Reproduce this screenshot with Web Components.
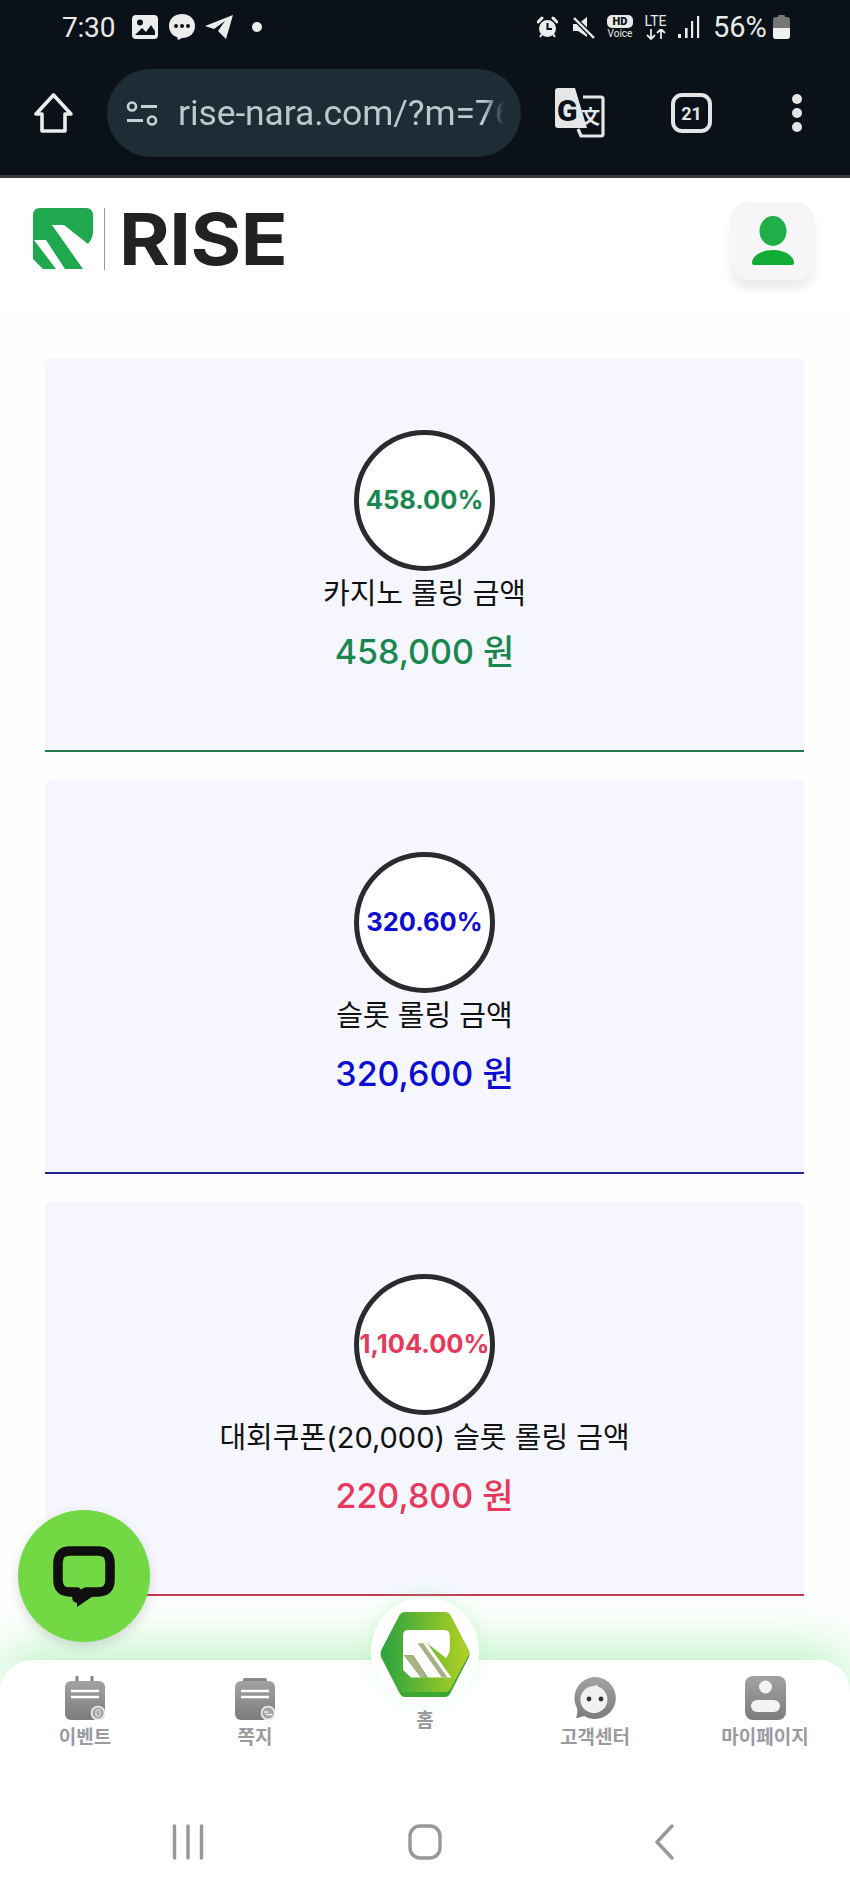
<!DOCTYPE html>
<html lang="ko">
<head>
<meta charset="utf-8">
<title>RISE</title>
<style>
  html, body { margin: 0; padding: 0; background: #fff; }
  body { font-family: Inter, "Noto Sans CJK KR", sans-serif; }
</style>
</head>
<body>
<app-shell>
  <phone-status-bar></phone-status-bar>
  <browser-toolbar url="rise-nara.com/?m=76" tabs="21"></browser-toolbar>
  <site-header></site-header>
  <rolling-list>
    <rolling-card percent="458.00%" amount="458,000 원" tone="#1a8750" line="#23774b">카지노 롤링 금액</rolling-card>
    <rolling-card percent="320.60%" amount="320,600 원" tone="#0c0cd2" line="#25258f">슬롯 롤링 금액</rolling-card>
    <rolling-card percent="1,104.00%" amount="220,800 원" tone="#e6395c" line="#c63a52">대회쿠폰(20,000) 슬롯 롤링 금액</rolling-card>
  </rolling-list>
  <bottom-nav>
    <nav-item label="이벤트">
      <svg slot="icon" width="40" height="44" viewBox="0 0 40 44">
        <defs><linearGradient id="g1" x1="0" y1="0" x2="0" y2="1"><stop offset="0" stop-color="#a2a2a4"/><stop offset="1" stop-color="#7c7c7e"/></linearGradient></defs>
        <path d="M12 0v9M27 0v9" stroke="#858587" stroke-width="3" stroke-linecap="round"/>
        <rect y="5" width="40" height="39" rx="6" fill="url(#g1)"/>
        <path d="M6 15h28M6 21h28" stroke="#fff" stroke-width="2.6"/>
        <circle cx="33" cy="37" r="6.5" fill="#a5a5a7" stroke="#f1f1f1" stroke-width="1.6"/>
        <rect x="31" y="34" width="4" height="6" rx="1" fill="none" stroke="#eee" stroke-width="1"/>
      </svg>
    </nav-item>
    <nav-item label="쪽지">
      <svg slot="icon" width="40" height="44" viewBox="0 0 40 44">
        <rect x="8" y="2" width="24" height="6" rx="2" fill="#88888a"/>
        <rect y="5" width="40" height="39" rx="6" fill="url(#g1)"/>
        <path d="M6 15h28M6 21h28" stroke="#fff" stroke-width="2.6"/>
        <circle cx="33" cy="37" r="6.5" fill="#a5a5a7" stroke="#f1f1f1" stroke-width="1.6"/>
        <path d="M29 36h4M31 38.500h6" stroke="#eee" stroke-width="1.4"/>
      </svg>
    </nav-item>
    <nav-item label="홈" home></nav-item>
    <nav-item label="고객센터">
      <svg slot="icon" width="42" height="44" viewBox="0 0 42 44">
        <path d="M21 1a21 21 0 1 1-11 39q-5 2-8 2 2-4 1-10A21 21 0 0 1 21 1z" fill="url(#g1)"/>
        <path d="M22 8q1 2 3 3a13.500 13.500 0 1 1-5-1q2 0 2-2z" fill="#f1f1f3"/>
        <circle cx="15" cy="23" r="2.4" fill="#333"/>
        <circle cx="27" cy="23" r="2.4" fill="#333"/>
      </svg>
    </nav-item>
    <nav-item label="마이페이지">
      <svg slot="icon" width="41" height="44" viewBox="0 0 41 44">
        <rect width="41" height="44" rx="8" fill="url(#g1)"/>
        <circle cx="20.500" cy="11" r="6.500" fill="#f4f4f4"/>
        <rect x="6" y="22" width="29" height="12" rx="6" fill="#f4f4f4" transform="translate(0 2)"/>
      </svg>
    </nav-item>
  </bottom-nav>
  <system-nav></system-nav>
  <home-button></home-button>
  <chat-button></chat-button>
</app-shell>

<script>
const define = (name, html, props) => {
  customElements.define(name, class extends HTMLElement {
    constructor() {
      super();
      this.attachShadow({ mode: 'open' });
    }
    connectedCallback() {
      const attrs = {};
      for (const a of this.attributes) attrs[a.name] = a.value;
      const template = document.createElement('template');
      template.innerHTML = typeof html === 'function' ? html(attrs) : html;
      this.shadowRoot.innerHTML = '';
      this.shadowRoot.appendChild(template.content.cloneNode(true));
    }
  });
};

// R mark shared by the logo and the home button
const R_MARK = 'M7 0H53Q60 0 60 8V24Q60 30 55 36L31 17H19L50 61H32L13 32H1L23 61H10L0 51V7Q0 0 7 0z';

define('app-shell', `
  <style>
    :host { display: flex; flex-direction: column; position: relative; width: 850px; height: 1895px; overflow: hidden; background: #fff; }
  </style>
  <slot></slot>
`);

// --- Android status bar ---
define('phone-status-bar', `
  <style>
    :host { display: flex; align-items: center; justify-content: space-between; height: 52px; padding: 2px 60px 0 62px; box-sizing: border-box; background: #0b1118; color: #e9e9e9; font-family: Roboto, sans-serif; }
    .side { display: flex; align-items: center; }
    .clock { font-size: 28px; width: 54px; letter-spacing: -.2px; }
    .pct { font-size: 29px; margin-left: 13px; margin-right: 6px; width: 54px; white-space: nowrap; }
    svg { display: block; }
    .hd { display: flex; flex-direction: column; align-items: center; width: 26px; margin-left: 12px; }
    .hd b { display: block; width: 26px; height: 13px; border-radius: 5px; background: #e9e9e9; color: #0b1118; font-size: 11px; line-height: 13px; text-align: center; font-weight: 900; }
    .hd span { font-size: 10px; line-height: 11px; }
    .lte { display: flex; flex-direction: column; align-items: center; width: 25px; margin-left: 10px; font-size: 14px; line-height: 13px; }
    .lte svg { margin-top: 1px; }
  </style>
  <div class="side">
    <span class="clock">7:30</span>
    <svg width="26" height="24" viewBox="0 0 26 24" style="margin-left:16px">
      <rect width="26" height="24" rx="4" fill="#ececec"/>
      <circle cx="8" cy="7.500" r="3" fill="#0b1118"/>
      <path d="M3 20l7-7 4 4 5-7 4 6v4z" fill="#0b1118"/>
    </svg>
    <svg width="28" height="28" viewBox="0 0 28 28" style="margin-left:10px">
      <path d="M14 1C6 1 1 6 1 13c0 6 4 10 8 11l1 3 4-2c8 0 13-5 13-12S22 1 14 1z" fill="#ececec"/>
      <circle cx="8" cy="13" r="2" fill="#0b1118"/><circle cx="14" cy="13" r="2" fill="#0b1118"/><circle cx="20" cy="13" r="2" fill="#0b1118"/>
    </svg>
    <svg width="28" height="24" viewBox="0 0 28 24" style="margin-left:9px">
      <path d="M28 0L21 24 13 16 20 6 9 14 0 11z" fill="#ececec"/>
    </svg>
    <svg width="10" height="10" viewBox="0 0 10 10" style="margin-left:19px"><circle cx="5" cy="5" r="5" fill="#ececec"/></svg>
  </div>
  <div class="side">
    <svg width="21" height="23" viewBox="0 0 21 23">
      <circle cx="10.500" cy="12.500" r="8.500" fill="#ececec"/>
      <path d="M1 6l4-4M20 6l-4-4" stroke="#ececec" stroke-width="3" stroke-linecap="round"/>
      <path d="M3 21l2-3M18 21l-2-3" stroke="#ececec" stroke-width="2"/>
      <path d="M10.500 7v6h4.500" fill="none" stroke="#0b1118" stroke-width="2"/>
    </svg>
    <svg width="23" height="23" viewBox="0 0 23 23" style="margin-left:14px">
      <path d="M1 8h5l9-7v20l-9-6H1z" fill="#ececec"/>
      <path d="M1 1l21 21" stroke="#0b1118" stroke-width="5"/>
      <path d="M2 2l20 20" stroke="#ececec" stroke-width="2.400"/>
    </svg>
    <div class="hd"><b>HD</b><span>Voice</span></div>
    <div class="lte"><span>LTE</span>
      <svg width="22" height="11" viewBox="0 0 22 11"><path d="M6 0v10M2 6l4 4 4-4M16 10V0M12 4l4-4 4 4" fill="none" stroke="#e9e9e9" stroke-width="1.800"/></svg>
    </div>
    <svg width="22" height="24" viewBox="0 0 22 24" style="margin-left:10px">
      <rect x="0" y="19" width="3" height="4" fill="#ececec"/>
      <rect x="7" y="13" width="2.600" height="10" fill="#ececec"/>
      <rect x="13" y="6" width="2.200" height="17" fill="#ececec"/>
      <rect x="19" y="1" width="2.200" height="22" fill="#ececec"/>
    </svg>
    <span class="pct">56%</span>
    <svg width="17" height="24" viewBox="0 0 17 24">
      <rect x="5" y="0" width="7" height="3" rx="1" fill="#767676"/>
      <rect y="2" width="17" height="22" rx="3" fill="#767676"/>
      <path d="M0 13h17v8a3 3 0 0 1-3 3H3a3 3 0 0 1-3-3z" fill="#f0f0f0"/>
    </svg>
  </div>
`);

// --- Browser address bar ---
define('browser-toolbar', (a) => `
  <style>
    :host { display: flex; align-items: center; padding: 17px 0 18px 34px; background: #0b1118; border-bottom: 3px solid #363b40; }
    svg { display: block; flex: none; }
    .pill { display: flex; align-items: center; width: 414px; height: 88px; margin: 0 34px; padding: 0 17px 0 19px; box-sizing: border-box; border-radius: 44px; background: #1e2c35; flex: none; }
    .url { margin-left: 20px; flex: 1; overflow: hidden; white-space: nowrap; color: #bcc7ce; font: 35.500px Roboto, sans-serif; letter-spacing: -.1px; -webkit-mask-image: linear-gradient(90deg, #000 94%, transparent); mask-image: linear-gradient(90deg, #000 94%, transparent); }
    .tabs { display: flex; align-items: center; justify-content: center; width: 41px; height: 40px; box-sizing: border-box; margin-left: 66px; border: 4px solid #e4e4e6; border-radius: 11px; color: #e4e4e6; font: 700 18px Roboto, sans-serif; flex: none; }
    .menu { display: flex; flex-direction: column; gap: 4px; margin-left: 80px; }
    .menu i { display: block; width: 10px; height: 10px; border-radius: 50%; background: #e4e4e6; }
  </style>
  <svg width="39" height="40" viewBox="0 0 39 40">
    <path d="M19.500 2L2 21h6v17h23V21h6z" fill="none" stroke="#ececec" stroke-width="3.600" stroke-linejoin="round"/>
  </svg>
  <div class="pill">
    <svg width="32" height="25" viewBox="0 0 32 25">
      <circle cx="6" cy="5.500" r="4" fill="none" stroke="#c6d0d6" stroke-width="2.600"/>
      <path d="M15 5.500h16M1 19.500h16" stroke="#c6d0d6" stroke-width="2.800"/>
      <circle cx="26" cy="19.500" r="4" fill="none" stroke="#c6d0d6" stroke-width="2.600"/>
    </svg>
    <span class="url">${a.url}</span>
  </div>
  <svg width="50" height="50" viewBox="0 0 50 50">
    <path d="M3 0h17l12 40H3a3 3 0 0 1-3-3V3a3 3 0 0 1 3-3z" fill="#e6e6e8"/>
    <path d="M28 9h18a2 2 0 0 1 2 2v35a2 2 0 0 1-2 2H26l-3-7" fill="none" stroke="#e6e6e8" stroke-width="3.200"/>
    <text x="2" y="33" font-family="Roboto, sans-serif" font-weight="900" font-size="30" fill="#0b1118">G</text>
    <text x="26" y="36" font-family="'Noto Sans CJK KR', sans-serif" font-weight="700" font-size="19" fill="#e6e6e8">文</text>
  </svg>
  <div class="tabs">${a.tabs}</div>
  <div class="menu"><i></i><i></i><i></i></div>
`);

// --- Site header with logo ---
define('site-header', `
  <style>
    :host { display: flex; align-items: center; justify-content: space-between; height: 130px; padding: 0 36px 8px 33px; box-sizing: border-box; background: #fff; flex: none; }
    .logo { display: flex; align-items: center; }
    .logo svg { display: block; }
    .rule { width: 1px; height: 62px; margin: 0 14px 0 11px; background: #9b9b9b; }
    .word { font: 700 72px/62px Inter, sans-serif; color: #222224; letter-spacing: -.5px; transform: scaleX(1.075); transform-origin: left center; }
    .user { display: flex; align-items: center; justify-content: center; width: 83px; height: 78px; margin-top: 4px; border-radius: 18px; background: #f6f6f9; box-shadow: 0 9px 10px rgba(0,0,0,.08); }
  </style>
  <div class="logo">
    <svg width="60" height="62" viewBox="0 0 60 62"><path d="${R_MARK}" fill="#1fa84d"/></svg>
    <span class="rule"></span>
    <span class="word">RISE</span>
  </div>
  <div class="user">
    <svg width="44" height="50" viewBox="0 0 44 50">
      <ellipse cx="22" cy="15" rx="13.500" ry="15" fill="#1fae48"/>
      <path d="M1 47C1 40 10 34 22 34s21 6 21 13q0 2-3 2H4q-3 0-3-2z" fill="#12ad36"/>
    </svg>
  </div>
`);

define('rolling-list', `
  <style>
    :host { display: flex; flex-direction: column; gap: 28px; flex: none; height: 1352px; padding: 50px 46px 0 45px; box-sizing: border-box; background: #fdfefd; }
  </style>
  <slot></slot>
`);

// --- Rolling progress card ---
define('rolling-card', (a) => `
  <style>
    :host { display: flex; flex-direction: column; align-items: center; height: 394px; padding-top: 72px; box-sizing: border-box; background: #f6f7fe; border-bottom: 2px solid ${a.line}; border-radius: 6px 6px 0 0; flex: none; }
    .ring { display: flex; align-items: center; justify-content: center; width: 141px; height: 141px; box-sizing: border-box; padding-bottom: 2px; border: 5px solid #2b2b2f; border-radius: 50%; background: #fff; color: ${a.tone}; font-size: 25.500px; font-weight: 700; white-space: nowrap; }
    .label { margin-top: 3px; font-size: 29px; line-height: 40px; color: #111; }
    .amount { margin-top: 18px; font-size: 34px; line-height: 40px; font-weight: 500; color: ${a.tone}; }
  </style>
  <div class="ring">${a.percent}</div>
  <div class="label"><slot></slot></div>
  <div class="amount">${a.amount}</div>
`);

// --- Bottom tab bar ---
define('bottom-nav', `
  <style>
    :host { display: grid; grid-template-columns: repeat(5, 1fr); position: relative; height: 120px; flex: none; background: #fff; border-radius: 32px 32px 0 0; box-shadow: 0 -14px 46px rgba(70,225,95,.32); }
  </style>
  <slot></slot>
`);

define('nav-item', (a) => `
  <style>
    :host { display: flex; flex-direction: column; align-items: center; padding-top: ${a.home !== undefined ? 49 : 16}px; }
    .icon { display: flex; align-items: flex-end; height: 44px; }
    .text { margin-top: ${a.home !== undefined ? 0 : 6}px; font-size: 19px; line-height: 24px; font-weight: 700; color: #9a9aa0; white-space: nowrap; }
    ${a.home !== undefined ? '.icon { display: none; }' : ''}
  </style>
  <div class="icon"><slot name="icon"></slot></div>
  <div class="text">${a.label}</div>
`);

// --- Android navigation buttons ---
define('system-nav', `
  <style>
    :host { display: block; position: relative; flex: 1; background: #fff; padding-top: 44px; box-sizing: border-box; }
    .row { display: flex; align-items: center; padding-left: 172px; }
    svg { display: block; }
  </style>
  <div class="row">
    <svg width="32" height="36" viewBox="0 0 32 36"><path d="M2.500 2v32M16 2v32M29.500 2v32" stroke="#98989a" stroke-width="3.400" stroke-linecap="round"/></svg>
    <svg width="34" height="36" viewBox="0 0 34 36" style="margin-left:204px"><rect x="2" y="2" width="30" height="32" rx="10" fill="none" stroke="#98989a" stroke-width="3.400"/></svg>
    <svg width="20" height="36" viewBox="0 0 20 36" style="margin-left:212px"><path d="M18 2L3 18l15 16" fill="none" stroke="#98989a" stroke-width="3.400" stroke-linecap="round" stroke-linejoin="round"/></svg>
  </div>
`);

// --- Floating buttons ---
define('home-button', `
  <style>
    :host { position: absolute; left: 371px; top: 1597px; width: 108px; height: 108px; display: flex; align-items: center; justify-content: center; border-radius: 50%; background: #fff; box-shadow: 0 -4px 18px rgba(120,235,140,.22); }
    svg { display: block; margin-top: 6px; }
  </style>
  <svg width="92" height="87" viewBox="-1 -1 92 87">
    <defs>
      <linearGradient id="hex" x1="0" y1="0" x2="1" y2="0"><stop offset="0" stop-color="#29a23f"/><stop offset="1" stop-color="#b3d222"/></linearGradient>
    </defs>
    <path d="M25 2H65Q69 2 71 5L89 39Q90 42 89 45L71 80Q69 85 65 85H25Q21 85 19 80L1 45Q0 42 1 39L19 5Q21 2 25 2z" fill="#3da734"/>
    <path d="M25 0H65Q69 0 71 4L88 37Q90 41 88 44L71 76Q69 80 65 80H25Q21 80 19 76L2 44Q0 41 2 37L19 4Q21 0 25 0z" fill="url(#hex)"/>
    <g transform="translate(23 18) scale(.78)">
      <path d="${R_MARK}" fill="#fff"/>
      <path d="M19 17H31L62 61H50z" fill="#fff"/>
      <path d="M19 17H26L57 61H50z" fill="#a6b184"/>
      <path d="M1 32H13L32 61H23z" fill="#a6b184"/>
    </g>
  </svg>
`);

define('chat-button', `
  <style>
    :host { position: absolute; left: 18px; top: 1510px; width: 132px; height: 132px; display: flex; align-items: center; justify-content: center; border-radius: 50%; background: #72d945; box-shadow: 0 4px 12px rgba(0,0,0,.14); }
    svg { display: block; }
  </style>
  <svg width="62" height="64" viewBox="0 0 62 64">
    <path d="M17 7H45Q57 7 57 19V36Q57 48 45 48H33L24 54V48H17Q5 48 5 36V19Q5 7 17 7z" fill="none" stroke="#0f0f0f" stroke-width="9.500" stroke-linejoin="round"/>
    <path d="M24 46L46 48 24 63z" fill="#0f0f0f"/>
  </svg>
`);
</script>
</body>
</html>
